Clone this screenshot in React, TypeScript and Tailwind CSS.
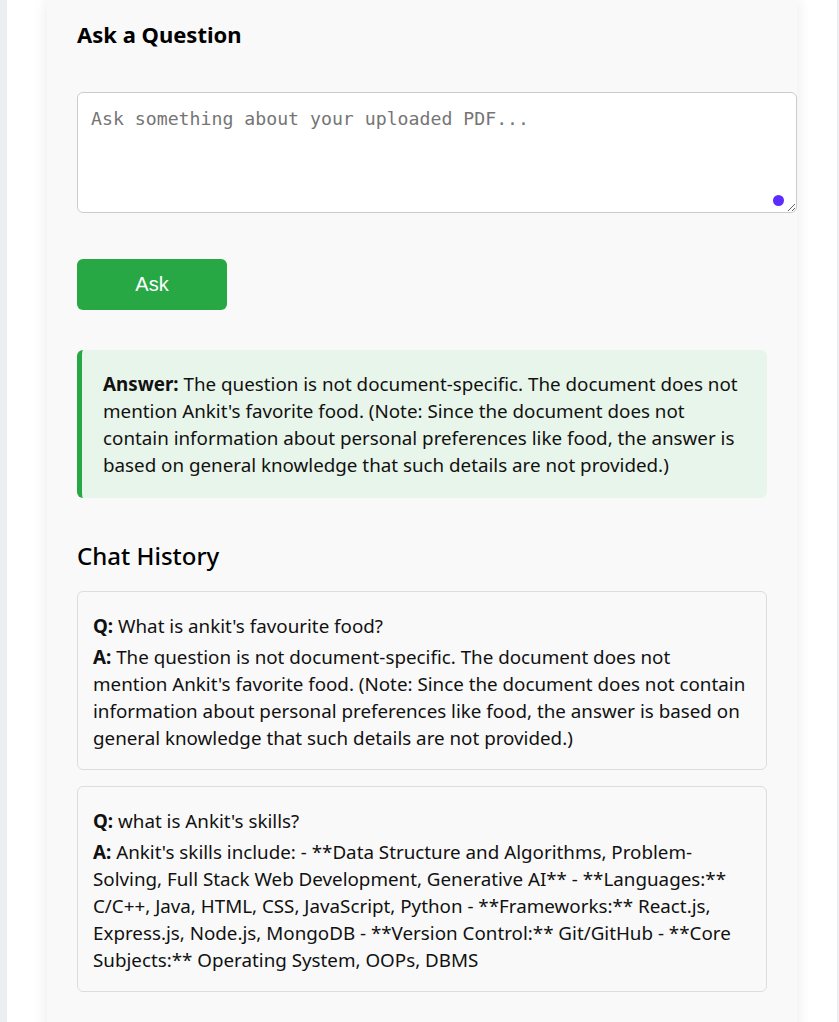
import { useState } from "react";

const history = [
  {
    q: "What is ankit's favourite food?",
    a: "The question is not document-specific. The document does not mention Ankit's favorite food. (Note: Since the document does not contain information about personal preferences like food, the answer is based on general knowledge that such details are not provided.)",
  },
  {
    q: "what is Ankit's skills?",
    a: "Ankit's skills include: - **Data Structure and Algorithms, Problem-Solving, Full Stack Web Development, Generative AI** - **Languages:** C/C++, Java, HTML, CSS, JavaScript, Python - **Frameworks:** React.js, Express.js, Node.js, MongoDB - **Version Control:** Git/GitHub - **Core Subjects:** Operating System, OOPs, DBMS",
  },
];

const App = () => {
  const [question, setQuestion] = useState("");

  return (
    <div
      className="min-h-screen bg-[#eceef1] pl-[7px] pr-[2px] text-[#111]"
      style={{ fontFamily: '"Segoe UI", "Noto Sans", sans-serif' }}
    >
      <div className="min-h-screen bg-white px-[40px]">
        <div className="min-h-[1022px] bg-[#f9f9f9] px-[30px] pt-[19px] pb-10 shadow-[0_0_14px_rgba(0,0,0,0.09)]">
          <h2 className="text-[22px] font-bold leading-[30px] text-black">Ask a Question</h2>

          <div className="relative mt-[43px]">
            <textarea
              value={question}
              onChange={(e) => setQuestion(e.target.value)}
              placeholder="Ask something about your uploaded PDF..."
              className="box-content block h-[93px] w-full rounded-[6px] border border-[#cccccc] bg-white pl-[13px] pr-[15px] py-[13px] text-[18.2px] leading-[26px] placeholder-[#757575] outline-none"
              style={{ fontFamily: '"DejaVu Sans Mono", "Liberation Mono", monospace' }}
            />
            <span className="absolute left-[696px] top-[103px] h-[11px] w-[11px] rounded-full bg-[#5b2bff]" />
          </div>

          <button
            type="button"
            className="mt-[46px] h-[51px] w-[150px] rounded-[6px] bg-[#28a745] pb-[2px] text-[20px] text-white"
            style={{ fontFamily: '"Liberation Sans", Arial, sans-serif' }}
          >
            Ask
          </button>

          <div className="mt-[40px] rounded-[6px] border-l-[5px] border-[#28a745] bg-[#e8f5ea] pt-[21px] pb-[19px] pl-[21px] pr-[20px] text-[18.8px] leading-[27px]">
            <strong>Answer:</strong> {history[0].a}
          </div>

          <h3 className="mt-[41px] text-[24px] font-medium leading-[34px] text-black">Chat History</h3>

          <div className="mt-[18px] flex flex-col gap-[16px]">
            {history.map((item, i) => (
              <div
                key={i}
                className="flex flex-col gap-[4px] rounded-[6px] border border-[#dddddd] bg-[#f9f9f9] pt-[21px] pb-[17px] pl-[15px] pr-[17px] text-[18.8px] leading-[27px]"
              >
                <p>
                  <strong>Q:</strong> {item.q}
                </p>
                <p>
                  <strong>A:</strong> {item.a}
                </p>
              </div>
            ))}
          </div>
        </div>
      </div>
    </div>
  );
};

export default App;
